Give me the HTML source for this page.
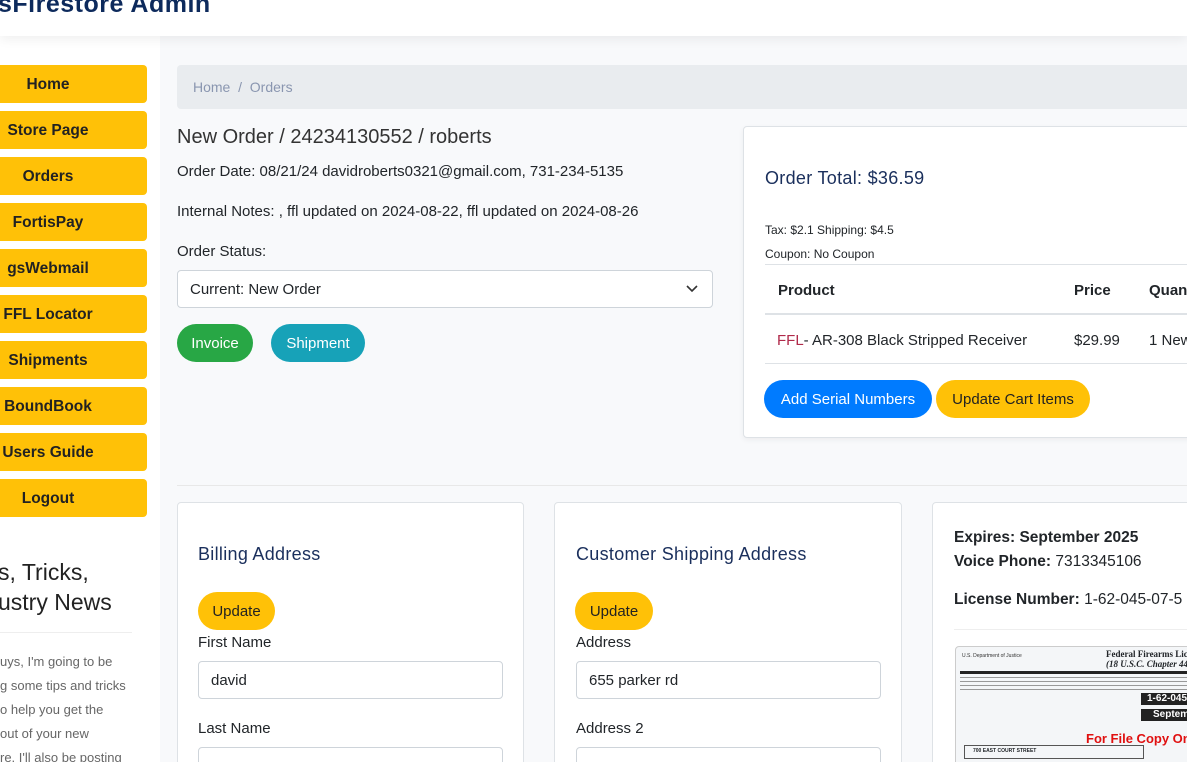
<!DOCTYPE html>
<html><head><meta charset="utf-8"><style>
*{box-sizing:border-box;margin:0;padding:0}
html{width:1187px;height:762px;overflow:hidden}
body{width:1187px;height:762px;overflow:hidden;background:#f8f9fb;font-family:"Liberation Sans",sans-serif;color:#212529;position:relative}
.hdr{position:absolute;left:0;top:0;width:1187px;height:36px;background:#fff;box-shadow:0 4px 10px rgba(0,0,0,.06);z-index:2}
.hdr span{position:absolute;left:-2px;top:-10px;font-size:25px;font-weight:bold;color:#0d2a5c;letter-spacing:.5px}
.side{position:absolute;left:0;top:36px;width:160px;height:726px;background:#fff}
.nb{position:absolute;left:-50px;width:197px;height:38px;background:#ffc107;border-radius:4px;font-weight:bold;font-size:15.5px;color:#222;line-height:40px}
.nb span{position:absolute;left:0;width:196px;text-align:center}
.abs{position:absolute}
.card{position:absolute;background:#fff;border:1px solid #dee2e6;border-radius:4px}
.in{position:absolute;height:38px;border:1px solid #ced4da;border-radius:4px;background:#fff;font-size:15px;padding-left:12px;line-height:38px}
.btn{position:absolute;height:38px;border-radius:19px;font-size:15px;line-height:39px;text-align:center}
.h5{font-size:18px;color:#1a2f5c;letter-spacing:.3px}
</style></head><body>
<div class="hdr"><span>sFirestore Admin</span></div>
<div class="side">
<div class="nb" style="top:29px"><span>Home</span></div>
<div class="nb" style="top:75px"><span>Store Page</span></div>
<div class="nb" style="top:121px"><span>Orders</span></div>
<div class="nb" style="top:167px"><span>FortisPay</span></div>
<div class="nb" style="top:213px"><span>gsWebmail</span></div>
<div class="nb" style="top:259px"><span>FFL Locator</span></div>
<div class="nb" style="top:305px"><span>Shipments</span></div>
<div class="nb" style="top:351px"><span>BoundBook</span></div>
<div class="nb" style="top:397px"><span>Users Guide</span></div>
<div class="nb" style="top:443px"><span>Logout</span></div>
<div class="abs" style="left:-2px;top:521px;font-size:23px;line-height:30px;color:#222">s, Tricks,<br>ustry News</div>
<div class="abs" style="left:0;top:596px;width:132px;border-top:1px solid #eee"></div>
<div class="abs" style="left:0;top:614px;font-size:13px;line-height:24px;color:#666;white-space:nowrap">uys, I'm going to be<br>g some tips and tricks<br>o help you get the<br>out of your new<br>re. I'll also be posting</div>
</div>
<div class="abs" style="left:177px;top:65px;width:1020px;height:44px;background:#e9ecef;border-radius:4px;font-size:14px;line-height:45px;padding-left:16px;color:#8a96b0">Home &nbsp;/&nbsp; Orders</div>
<div class="abs" style="left:177px;top:126px;font-size:20px;color:#333">New Order / 24234130552 / roberts</div>
<div class="abs" style="left:177px;top:163px;font-size:15px">Order Date: 08/21/24 davidroberts0321@gmail.com, 731-234-5135</div>
<div class="abs" style="left:177px;top:203px;font-size:15px">Internal Notes: , ffl updated on 2024-08-22, ffl updated on 2024-08-26</div>
<div class="abs" style="left:177px;top:243px;font-size:15px">Order Status:</div>
<div class="in" style="left:177px;top:270px;width:536px">Current: New Order<svg style="position:absolute;right:14px;top:14px" width="12" height="8"><path d="M1 1l5 5 5-5" stroke="#333" stroke-width="1.6" fill="none"/></svg></div>
<div class="btn" style="left:177px;top:324px;width:76px;background:#28a745;color:#fff">Invoice</div>
<div class="btn" style="left:271px;top:324px;width:94px;background:#17a2b8;color:#fff">Shipment</div>
<div class="card" style="left:743px;top:126px;width:460px;height:312px;box-shadow:0 2px 6px rgba(0,0,0,.05)">
<div class="abs h5" style="left:21px;top:41px">Order Total: $36.59</div>
<div class="abs" style="left:21px;top:96px;font-size:12px">Tax: $2.1 Shipping: $4.5</div>
<div class="abs" style="left:21px;top:120px;font-size:12px">Coupon: No Coupon</div>
<div class="abs" style="left:21px;top:137px;width:440px;border-top:1px solid #dee2e6"></div>
<div class="abs" style="left:34px;top:155px;font-size:15px;font-weight:bold">Product</div>
<div class="abs" style="left:330px;top:155px;font-size:15px;font-weight:bold">Price</div>
<div class="abs" style="left:405px;top:155px;font-size:15px;font-weight:bold">Quantity</div>
<div class="abs" style="left:21px;top:186px;width:440px;border-top:2px solid #dee2e6"></div>
<div class="abs" style="left:33px;top:205px;font-size:15px"><span style="color:#b02a4a">FFL</span>- AR-308 Black Stripped Receiver</div>
<div class="abs" style="left:330px;top:205px;font-size:15px">$29.99</div>
<div class="abs" style="left:405px;top:205px;font-size:15px">1 New</div>
<div class="abs" style="left:21px;top:236px;width:440px;border-top:1px solid #dee2e6"></div>
<div class="btn" style="left:20px;top:253px;width:168px;background:#007bff;color:#fff">Add Serial Numbers</div>
<div class="btn" style="left:192px;top:253px;width:154px;background:#ffc107;color:#222">Update Cart Items</div>
</div>
<div class="abs" style="left:177px;top:485px;width:1010px;border-top:1px solid #e8e8e8"></div>
<div class="card" style="left:177px;top:502px;width:347px;height:280px">
<div class="abs h5" style="left:20px;top:41px">Billing Address</div>
<div class="btn" style="left:20px;top:89px;width:77px;background:#ffc107;color:#222">Update</div>
<div class="abs" style="left:20px;top:131px;font-size:15px">First Name</div>
<div class="in" style="left:20px;top:158px;width:305px">david</div>
<div class="abs" style="left:20px;top:217px;font-size:15px">Last Name</div>
<div class="in" style="left:20px;top:244px;width:305px"></div>
</div>
<div class="card" style="left:554px;top:502px;width:348px;height:280px">
<div class="abs h5" style="left:21px;top:41px">Customer Shipping Address</div>
<div class="btn" style="left:20px;top:89px;width:78px;background:#ffc107;color:#222">Update</div>
<div class="abs" style="left:21px;top:131px;font-size:15px">Address</div>
<div class="in" style="left:21px;top:158px;width:305px">655 parker rd</div>
<div class="abs" style="left:21px;top:217px;font-size:15px">Address 2</div>
<div class="in" style="left:21px;top:244px;width:305px"></div>
</div>
<div class="card" style="left:932px;top:502px;width:280px;height:280px">
<div class="abs" style="left:21px;top:23px;font-size:15.5px;line-height:24px;white-space:nowrap"><b>Expires: September 2025</b><br><b>Voice Phone:</b> 7313345106</div>
<div class="abs" style="left:21px;top:88px;font-size:15.5px;white-space:nowrap"><b>License Number:</b> 1-62-045-07-5</div>
<div class="abs" style="left:21px;top:126px;width:260px;border-top:1px solid #eee"></div>
<div class="abs" style="left:22px;top:143px;width:260px;height:130px;border:1px solid #ccc;border-radius:4px;background:#f4f6f8;overflow:hidden">
<div class="abs" style="left:6px;top:6px;font-size:5px;color:#333">U.S. Department of Justice</div>
<div class="abs" style="left:150px;top:2px;font-size:9px;font-weight:bold;font-family:'Liberation Serif',serif;white-space:nowrap">Federal Firearms License<br><i>(18 U.S.C. Chapter 44)</i></div>
<div class="abs" style="left:4px;top:24px;width:256px;height:3px;background:#222"></div>
<div class="abs" style="left:4px;top:30px;width:256px;height:14px;background:repeating-linear-gradient(#999 0 1px,#f4f6f8 1px 4px)"></div>
<div class="abs" style="left:185px;top:46px;width:80px;height:12px;background:#222;color:#fff;font-size:10px;font-weight:bold;padding-left:6px">1-62-045-0</div>
<div class="abs" style="left:185px;top:62px;width:80px;height:12px;background:#222;color:#fff;font-size:10px;font-weight:bold;padding-left:12px">Septemb</div>
<div class="abs" style="left:130px;top:84px;font-size:13px;font-weight:bold;color:#e01010;white-space:nowrap">For File Copy Only</div>
<div class="abs" style="left:8px;top:98px;width:180px;height:14px;border:1px solid #555;font-size:5px;font-weight:bold;padding:2px 8px">700 EAST COURT STREET</div>
</div>
</div>
</body></html>
